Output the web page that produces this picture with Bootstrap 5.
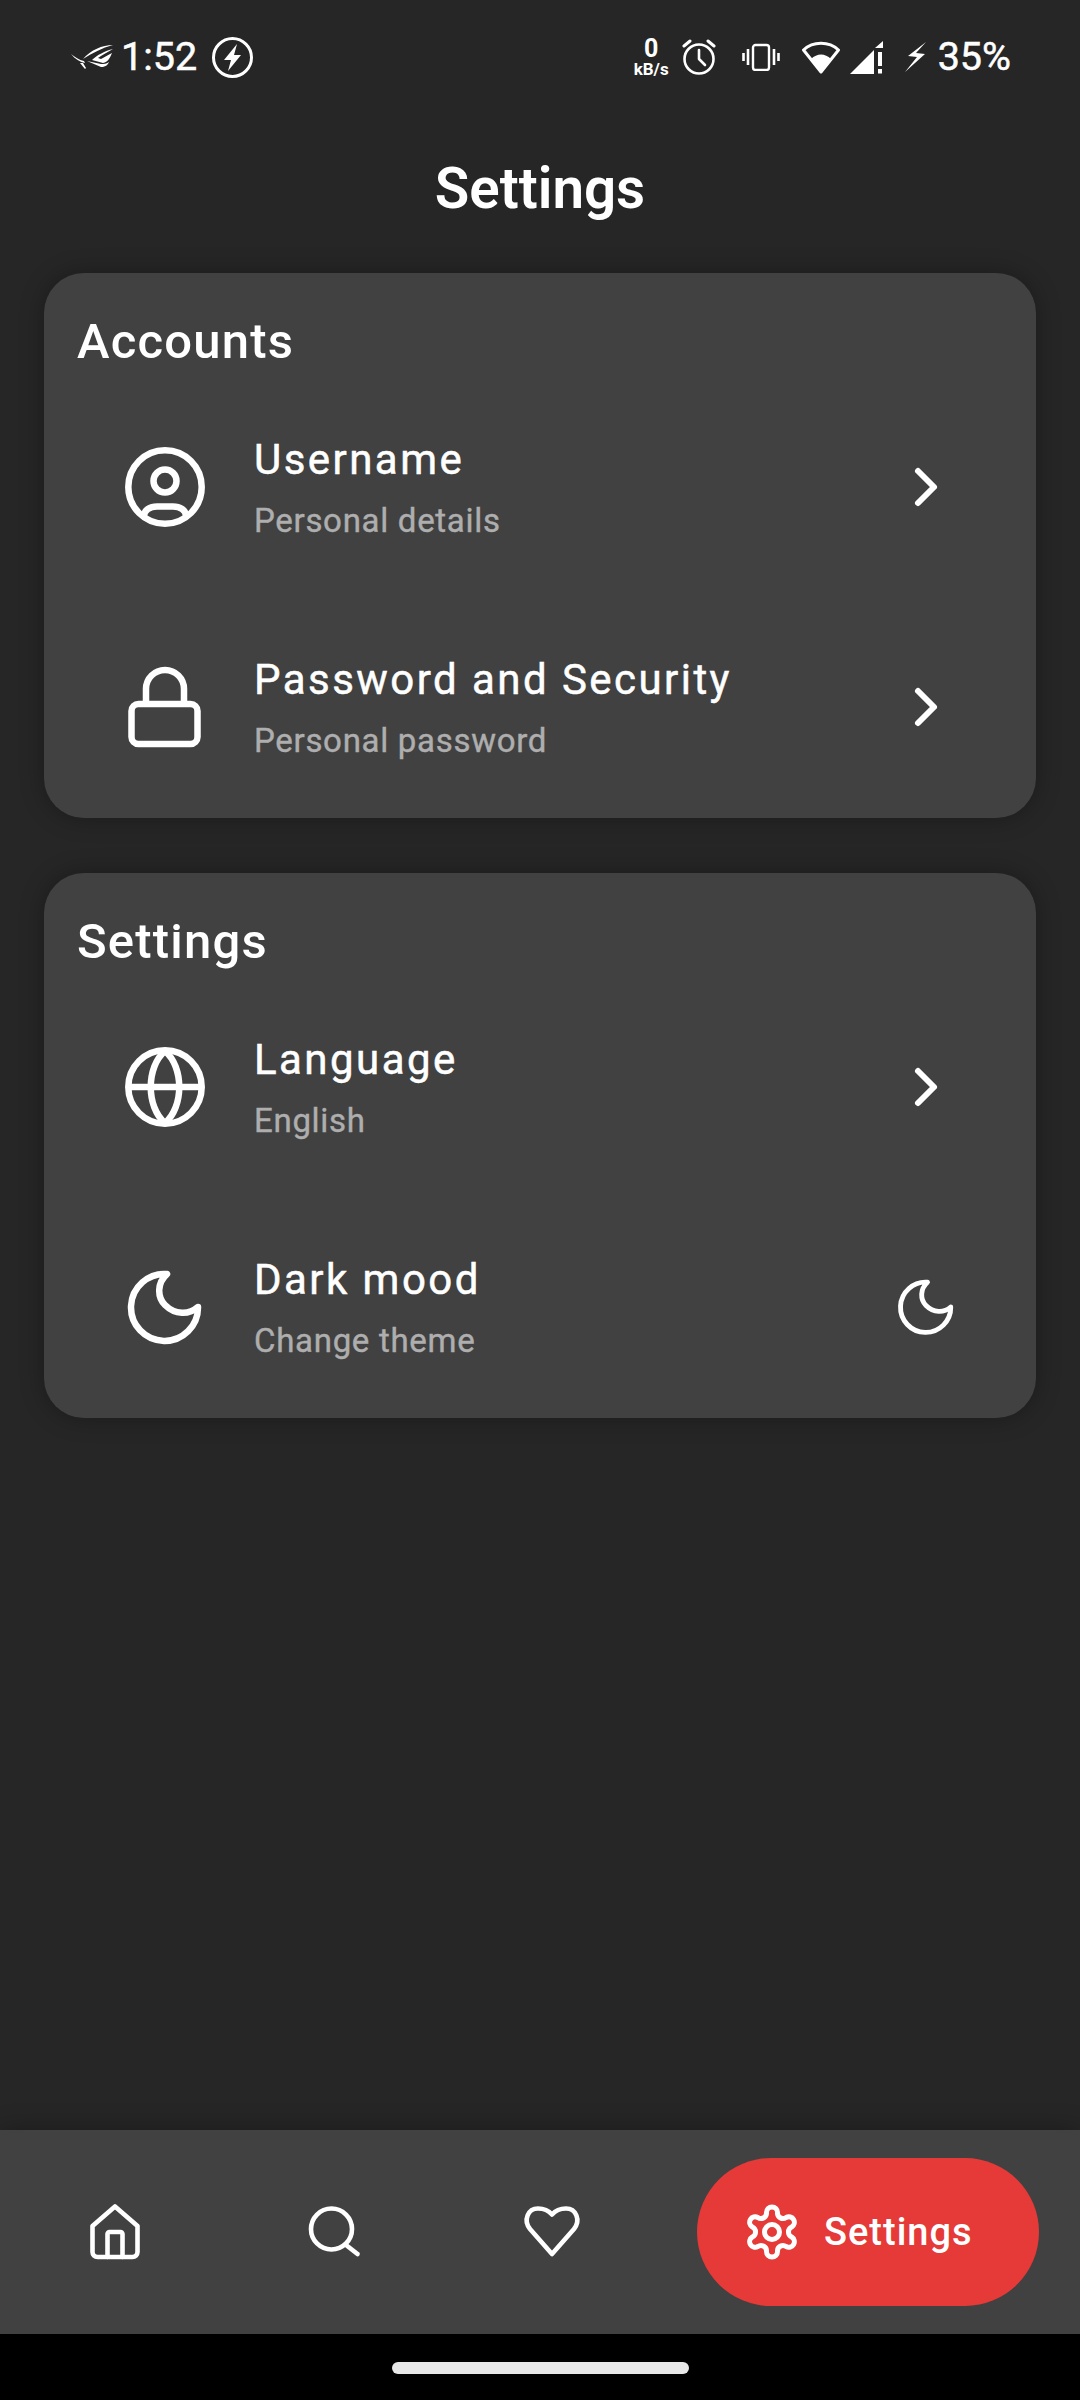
<!DOCTYPE html>
<html lang="en">

<head>
    <meta charset="UTF-8">
    <title>Settings</title>
    <link href="https://cdn.jsdelivr.net/npm/bootstrap@5.3.0/dist/css/bootstrap.min.css" rel="stylesheet">
    <style>
        body {
            background: #262626;
            color: #fff;
            font-family: Roboto, "Liberation Sans", sans-serif;
            height: 2400px;
            overflow: hidden;
        }

        svg {
            display: block;
            flex-shrink: 0;
        }

        .line-icon {
            fill: none;
            stroke: #fff;
            stroke-linecap: round;
            stroke-linejoin: round;
        }

        /* status bar */
        .status-bar {
            height: 114px;
            padding: 0 69px 0 71px;
        }

        .status-text {
            font-size: 39.5px;
            line-height: 1;
            font-weight: 400;
            -webkit-text-stroke: .5px #fff;
        }

        .net-speed {
            width: 35px;
            text-align: center;
            font-weight: 700;
            line-height: 1;
        }

        .net-value {
            font-size: 25px;
            height: 25px;
        }

        .net-unit {
            font-size: 17px;
            margin: 0 -2px;
            white-space: nowrap;
        }

        .ms-8 { margin-left: 8px; }
        .ms-10 { margin-left: 10px; }
        .ms-11 { margin-left: 11px; }
        .ms-13 { margin-left: 13px; }
        .ms-15 { margin-left: 15px; }
        .ms-22 { margin-left: 22px; }
        .ms-26 { margin-left: 26px; }

        .page-title {
            height: 159px;
            padding-top: 45px;
            margin: 0;
            font-size: 56.5px;
            line-height: 60px;
            font-weight: 600;
            text-align: center;
        }

        /* cards */
        .settings-card {
            background: #414141;
            border: 0;
            border-radius: 40px;
            margin: 0 44px 55px;
            height: 545px;
            color: #fff;
            box-shadow: 0 0 24px rgba(0, 0, 0, .3);
        }

        .section-title {
            height: 104px;
            margin: 0;
            padding: 41px 0 0 33px;
            font-size: 49px;
            line-height: 56px;
            font-weight: 500;
            letter-spacing: 1.2px;
        }

        .setting-row {
            height: 220px;
            padding: 0 62px 0 73px;
        }

        .row-label {
            margin-left: 41px;
            padding-top: 2px;
        }

        .row-title {
            font-size: 42px;
            line-height: 50px;
            letter-spacing: 2.45px;
            font-weight: 400;
            -webkit-text-stroke: .5px #fff;
        }

        .row-sub {
            margin-top: 16px;
            font-size: 33px;
            line-height: 40px;
            letter-spacing: .7px;
            color: #aeaeae;
            font-weight: 400;
            -webkit-text-stroke: .4px #aeaeae;
        }

        .theme-toggle {
            margin-right: 12px;
            margin-left: 12px;
        }

        /* bottom nav */
        .bottom-nav {
            height: 204px;
            background: #414141;
            padding: 0 41px 0 6px;
            box-shadow: 0 0 24px rgba(0, 0, 0, .3);
        }

        .nav-cell {
            width: 218.5px;
        }

        .nav-pill-active {
            width: 342px;
            height: 148px;
            margin-left: auto;
            border-radius: 74px;
            background: #e53a37;
            padding-left: 43px;
        }

        .nav-pill-label {
            margin-left: 20px;
            font-size: 38px;
            font-weight: 500;
            letter-spacing: 1px;
        }

        .gesture-area {
            height: 66px;
            background: #000;
            padding-top: 28px;
        }

        .gesture-handle {
            width: 297px;
            height: 12px;
            border-radius: 6px;
            background: #e8e8e8;
        }
    </style>
</head>

<body class="d-flex flex-column">

    <!-- Status bar -->
    <div class="status-bar d-flex align-items-center justify-content-between">
        <div class="d-flex align-items-center">
            <svg width="42" height="26" viewBox="0 0 42 26" fill="#fff">
                <path d="M0 10 C4 13 8 16 13 17 L14 19 C9 18 4 15 0 10Z" />
                <path d="M9 19 L14 25 L15 24 L12 19Z" />
                <path d="M42 1 C31 1 20 6 12 15 C21 9 31 4 42 1Z" />
                <path d="M42 5 C34 7 26 11 21 16 L32 19 C37 18 39 14 41 9 C37 11 34 13 30 15 L27 14 C31 11 37 8 42 5Z" />
                <path d="M16 17 L30 23 C34 23 37 21 38 18 C35 20 33 20 30 20Z" />
            </svg>
            <span class="status-text ms-8">1:52</span>
            <svg class="ms-15" width="41" height="41" viewBox="0 0 41 41">
                <circle cx="20.5" cy="20.5" r="19" fill="none" stroke="#fff" stroke-width="3" />
                <path d="M25 7 L12 23 H19 L16 34 L29 18 H22Z" fill="#fff" />
            </svg>
        </div>
        <div class="d-flex align-items-center">
            <div class="net-speed">
                <div class="net-value">0</div>
                <div class="net-unit">kB/s</div>
            </div>
            <svg class="line-icon ms-13" width="34" height="36" viewBox="0 0 34 36" stroke-width="2.6">
                <circle cx="17" cy="20" r="14.5" />
                <path d="M17 11 V20 L23 26" />
                <path d="M2 7 L8 2 M32 7 L26 2" stroke-width="3" />
            </svg>
            <svg class="line-icon ms-26" width="38" height="28" viewBox="0 0 38 28" stroke-width="2.4">
                <rect x="11" y="2" width="16" height="25" rx="2.5" />
                <path d="M6 6 V22 M1.5 10 V18 M32 6 V22 M36.5 10 V18" stroke-linecap="butt" stroke-width="2.6" />
            </svg>
            <svg class="ms-22" width="38" height="33" viewBox="0 0 38 33">
                <path d="M1.5 9 C11 0 27 0 36.5 9 L19 31Z" fill="none" stroke="#fff" stroke-width="3" stroke-linejoin="round" />
                <path d="M9 18 C15 12 23 12 29 18 L19 32Z" fill="#fff" />
            </svg>
            <svg class="ms-10" width="33" height="33" viewBox="0 0 33 33" fill="#fff">
                <path d="M0 33 L24 9 V33Z" />
                <path d="M25 7 L33 0 V7Z" />
                <rect x="28" y="11" width="4" height="14" />
                <rect x="28" y="28" width="4" height="4.5" />
            </svg>
            <svg class="ms-22" width="22" height="30" viewBox="0 0 22 30" fill="#fff">
                <path d="M21 0 L3 14 L12 15 L0 30 L20 12 L11 11Z" />
            </svg>
            <span class="status-text ms-11">35%</span>
        </div>
    </div>

    <h1 class="page-title">Settings</h1>

    <!-- Accounts -->
    <div class="card settings-card">
        <h2 class="section-title">Accounts</h2>
        <div class="setting-row d-flex align-items-center">
            <svg class="line-icon" width="96" height="96" viewBox="0 0 96 96" stroke-width="6.5">
                <circle cx="48" cy="48" r="36.7" />
                <circle cx="48" cy="42" r="11.5" />
                <path d="M27 77 C27 71 33 67.5 40 67.5 H56 C63 67.5 69 71 69 77" />
            </svg>
            <div class="row-label flex-grow-1">
                <div class="row-title">Username</div>
                <div class="row-sub">Personal details</div>
            </div>
            <svg class="line-icon" width="96" height="96" viewBox="0 0 96 96" stroke-width="6">
                <path d="M40 32 L56 48 L40 64" />
            </svg>
        </div>
        <div class="setting-row d-flex align-items-center">
            <svg class="line-icon" width="96" height="96" viewBox="0 0 96 96" stroke-width="6.5">
                <rect x="14.5" y="45" width="66" height="40" rx="7" />
                <path d="M29 44 V30 a19 19 0 0 1 38 0 V44" />
            </svg>
            <div class="row-label flex-grow-1">
                <div class="row-title">Password and Security</div>
                <div class="row-sub">Personal password</div>
            </div>
            <svg class="line-icon" width="96" height="96" viewBox="0 0 96 96" stroke-width="6">
                <path d="M40 32 L56 48 L40 64" />
            </svg>
        </div>
    </div>

    <!-- Settings -->
    <div class="card settings-card">
        <h2 class="section-title">Settings</h2>
        <div class="setting-row d-flex align-items-center">
            <svg class="line-icon" width="96" height="96" viewBox="0 0 96 96" stroke-width="6.5">
                <circle cx="48" cy="48" r="36.7" />
                <path d="M12 48 H84" />
                <path d="M48 12 C67 28 67 68 48 84 C29 68 29 28 48 12Z" />
            </svg>
            <div class="row-label flex-grow-1">
                <div class="row-title">Language</div>
                <div class="row-sub">English</div>
            </div>
            <svg class="line-icon" width="96" height="96" viewBox="0 0 96 96" stroke-width="6">
                <path d="M40 32 L56 48 L40 64" />
            </svg>
        </div>
        <div class="setting-row d-flex align-items-center">
            <svg class="line-icon" width="96" height="96" viewBox="0 0 96 96" stroke-width="6.5">
                <path d="M50 15 A33.5 33.5 0 1 0 81 48 C72 56 58 56 48 46 C40 38 40 24 50 15Z" />
            </svg>
            <div class="row-label flex-grow-1">
                <div class="row-title">Dark mood</div>
                <div class="row-sub">Change theme</div>
            </div>
            <svg class="line-icon theme-toggle" width="72" height="72" viewBox="0 0 96 96" stroke-width="6.5">
                <path d="M50 15 A33.5 33.5 0 1 0 81 48 C72 56 58 56 48 46 C40 38 40 24 50 15Z" />
            </svg>
        </div>
    </div>

    <div class="flex-grow-1"></div>

    <!-- Bottom navigation -->
    <nav class="bottom-nav d-flex align-items-center">
        <div class="nav-cell d-flex justify-content-center">
            <svg class="line-icon" width="64" height="64" viewBox="0 0 64 64" stroke-width="4.6">
                <path d="M32 6.5 L9.5 26 V52 a5 5 0 0 0 5 5 H49.5 a5 5 0 0 0 5 -5 V26Z" />
                <path d="M24.5 57 V34 a2 2 0 0 1 2 -2 H37.5 a2 2 0 0 1 2 2 V57" />
            </svg>
        </div>
        <div class="nav-cell d-flex justify-content-center">
            <svg class="line-icon" width="64" height="64" viewBox="0 0 64 64" stroke-width="4.6">
                <circle cx="29.5" cy="29" r="20.5" />
                <path d="M44 45 L55.5 54" />
            </svg>
        </div>
        <div class="nav-cell d-flex justify-content-center">
            <svg class="line-icon" width="64" height="64" viewBox="0 0 64 64" stroke-width="4.6">
                <path d="M32 54 L10 29 C3 20 8 8.5 18 8.5 C24 8.5 29 11 32 14.5 C35 11 40 8.5 46 8.5 C56 8.5 61 20 54 29Z" />
            </svg>
        </div>
        <div class="nav-pill-active d-flex align-items-center">
            <svg class="line-icon" width="64" height="64" viewBox="0 0 64 64" stroke-width="5">
                <path d="M26.5 12.475 A5.5 5.5 0 0 1 37.5 12.475 A5.5 5.5 0 0 0 46.16 17.475 A5.5 5.5 0 0 1 51.66 27 A5.5 5.5 0 0 0 51.66 37 A5.5 5.5 0 0 1 46.16 46.525 A5.5 5.5 0 0 0 37.5 51.525 A5.5 5.5 0 0 1 26.5 51.525 A5.5 5.5 0 0 0 17.84 46.525 A5.5 5.5 0 0 1 12.34 37 A5.5 5.5 0 0 0 12.34 27 A5.5 5.5 0 0 1 17.84 17.475 A5.5 5.5 0 0 0 26.5 12.475Z" />
                <circle cx="32" cy="32" r="7.5" />
            </svg>
            <span class="nav-pill-label">Settings</span>
        </div>
    </nav>

    <div class="gesture-area d-flex justify-content-center">
        <div class="gesture-handle"></div>
    </div>

    <script src="https://cdn.jsdelivr.net/npm/bootstrap@5.3.0/dist/js/bootstrap.bundle.min.js"></script>
</body>

</html>
